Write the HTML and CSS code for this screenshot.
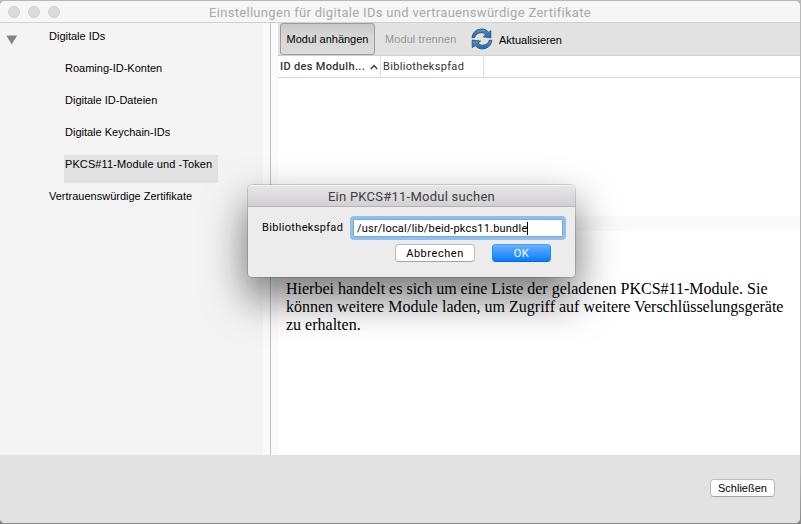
FILE: index.html
```
<!DOCTYPE html>
<html lang="de">
<head>
<meta charset="utf-8">
<title>Einstellungen für digitale IDs</title>
<link rel="stylesheet" href="styles.css">
</head>
<body>
<div class="window">
  <header class="titlebar">
    <div class="lights"><i></i><i></i><i></i></div>
    <span class="title">Einstellungen für digitale IDs und vertrauenswürdige Zertifikate</span>
  </header>
  <div class="body">
    <nav class="sidebar">
      <svg class="disclosure" width="12" height="10" viewBox="0 0 12 10"><path d="M.3 .5h10.8L5.7 9.500z" fill="#858585"/></svg>
      <div class="tree">
        <div class="item">Digitale IDs</div>
        <div class="item child">Roaming-ID-Konten</div>
        <div class="item child">Digitale ID-Dateien</div>
        <div class="item child">Digitale Keychain-IDs</div>
        <div class="item child selected">PKCS#11-Module und -Token</div>
        <div class="item">Vertrauenswürdige Zertifikate</div>
      </div>
    </nav>
    <div class="divider"></div>
    <main class="main">
      <div class="toolbar">
        <button class="tool pressed">Modul anhängen</button>
        <span class="tool-off">Modul trennen</span>
        <svg class="refresh" width="22" height="22" viewBox="0 0 22 22">
          <defs><linearGradient id="blue" x1="0" y1="0" x2="0" y2="1"><stop offset="0" stop-color="#5595cf"/><stop offset="1" stop-color="#2465a8"/></linearGradient></defs>
          <g fill="url(#blue)" stroke="#24486b" stroke-width=".8" stroke-linejoin="round">
            <path d="M1 9.600C1.600 4.300 5.600 1 10.600 1c3 0 5.400 1.200 7 3.300l2.200-1.600v7.100l-7.500-1 2.400-1.900C13.700 5.500 12.300 4.700 10.500 4.700 7.300 4.700 4.600 6.300 3.600 9.600z"/>
            <path d="M20.900 12.300C20.300 17.600 16.300 20.900 11.300 20.900c-3 0-5.400-1.200-7-3.300L1.200 19.600v-7.500l8.400 1-2.400 1.900c1 1.400 2.400 2.200 4.200 2.200 3.200 0 5.900-1.600 6.900-4.900z"/>
          </g>
        </svg>
        <span class="tool-refresh">Aktualisieren</span>
      </div>
      <div class="columns">
        <div class="col first"><span>ID des Modulh...</span><svg width="8" height="6" viewBox="0 0 8 6"><path d="M.8 5 4 1.500 7.200 5" fill="none" stroke="#333" stroke-width="1.300"/></svg></div>
        <div class="col second"><span>Bibliothekspfad</span></div>
      </div>
      <div class="list"></div>
      <div class="splitter"></div>
      <div class="description"><p>Hierbei handelt es sich um eine Liste der geladenen PKCS#11-Module. Sie</p><p>können weitere Module laden, um Zugriff auf weitere Verschlüsselungsgeräte</p><p>zu erhalten.</p></div>
    </main>
  </div>
  <footer class="footer"><button class="btn close">Schließen</button></footer>
</div>
<section class="dialog">
  <header class="dialog-title">Ein PKCS#11-Modul suchen</header>
  <div class="dialog-row">
    <label>Bibliothekspfad</label>
    <div class="field"><span class="path">/usr/local/lib/beid-pkcs11.bundle</span><i class="caret"></i></div>
  </div>
  <div class="dialog-actions">
    <button class="btn cancel">Abbrechen</button>
    <button class="btn ok">OK</button>
  </div>
</section>
</body>
</html>
```
FILE: styles.css
```
* { box-sizing: border-box; }
body {
  margin: 0;
  width: 801px;
  height: 524px;
  padding: 1px 1px 1px 0;
  overflow: hidden;
  background: linear-gradient(#b8b8b8, #b5b5b5 90%, #888);
  font: 11px/14px "Liberation Sans", Arial, sans-serif;
  color: #000;
}
button { margin: 0; padding: 0; font: inherit; color: inherit; }
span, label, .item { white-space: nowrap; }
.window {
  display: flex;
  flex-direction: column;
  height: 522px;
  border-radius: 5px;
  overflow: hidden;
  background: #fff;
}
.titlebar {
  position: relative;
  display: flex;
  align-items: center;
  justify-content: center;
  height: 22px;
  flex: none;
  background: #f6f6f6;
  border-bottom: 1px solid #d1d1d1;
  color: #a9a9a9;
  font: 13px/20px Roboto, sans-serif;
  letter-spacing: .31px;
}
.title { padding-top: 2px; }
.lights { position: absolute; left: 8px; top: 5px; display: flex; gap: 8px; }
.lights i { width: 12px; height: 12px; border-radius: 50%; background: #dcdcdc; border: 1px solid #cfcfcf; }
.body { display: flex; height: 432px; flex: none; }
.sidebar { display: flex; width: 263px; background: #f4f4f4; padding: 6px 0 0 6px; }
.disclosure { margin-top: 6px; flex: none; }
.tree { padding-left: 30px; }
.item { height: 32px; padding-left: 1px; }
.item.child { margin-left: 16px; }
.item.selected { width: 154px; height: 28px; margin-top: -2px; margin-bottom: 6px; padding-top: 2px; background: #e2e2e2; letter-spacing: .1px; }
.divider { width: 15px; background: linear-gradient(#c4c4c4, #c4c4c4) 7px 0 / 1px 100% no-repeat #fafafa; }
.main { display: flex; flex-direction: column; width: 522px; }
.toolbar { display: flex; align-items: center; height: 33px; flex: none; background: #e2e2e2; border-bottom: 1px solid #d0d0d0; padding-left: 2px; }
.tool { width: 95px; height: 32px; border: 1px solid #9c9c9c; border-radius: 3px; background: linear-gradient(#c9c9c9, #d6d6d6 40%, #dcdcdc); }
.tool-off { margin-left: 10px; width: 86px; color: #979797; letter-spacing: .08px; }
.tool-refresh { margin: 2px 0 0 6px; }
.columns { display: flex; height: 22px; flex: none; border-bottom: 1px solid #d6d6d6; color: #333; font: 11px/20px Roboto, sans-serif; letter-spacing: .33px; }
.col { display: flex; align-items: center; height: 21px; }
.first { width: 103px; padding: 0 2px; border-right: 1px solid #dedede; justify-content: space-between; font-weight: 500; }
.second { width: 103px; padding-left: 2px; border-right: 1px solid #dedede; }
.list { height: 138px; flex: none; }
.splitter { height: 15px; flex: none; background: #fafafa; }
.description { padding: 49px 0 0 8px; font: 16px/18px "Liberation Serif", "Times New Roman", serif; }
.description p { margin: 0; white-space: nowrap; }
.footer { display: flex; justify-content: flex-end; flex: 1; background: #e2e2e2; padding: 24px 25px 0 0; }
.btn { height: 18px; border: 1px solid #bcbcbc; border-bottom-color: #a5a5a5; border-radius: 4px; background: #fff; line-height: 16px; }
.close { width: 65px; }
.dialog {
  position: absolute;
  left: 248px;
  top: 185px;
  width: 327px;
  height: 92px;
  border-radius: 5px 5px 4px 4px;
  background: #ececec;
  box-shadow: 0 0 0 1px rgba(0,0,0,.15), 0 20px 40px 2px rgba(0,0,0,.52);
  font: 11px/14px Roboto, sans-serif;
  letter-spacing: .33px;
}
.dialog-title { height: 22px; border-bottom: 1px solid #b5b3b5; border-radius: 5px 5px 0 0; background: linear-gradient(#e8e6e8, #d2d0d2); box-shadow: inset 0 1px #f4f4f4; text-align: center; color: #3d3d3d; font-size: 13px; line-height: 23px; letter-spacing: .25px; }
.dialog-row { display: flex; align-items: center; height: 24px; margin: 9px 9px 0 14px; justify-content: space-between; }
.field { display: flex; align-items: center; width: 216px; height: 24px; padding-left: 4px; border: 3px solid #8dc0f0; border-radius: 4px; background: #fff; box-shadow: inset 0 0 0 1px #76a8dc; letter-spacing: .2px; }
.path { padding-top: 2px; }
.caret { width: 1px; height: 13px; background: #000; }
.dialog-actions { display: flex; justify-content: flex-end; gap: 17px; margin: 4px 24px 0 0; }
.dialog-actions .btn { letter-spacing: .55px; line-height: 17px; }
.cancel { width: 80px; }
.ok { width: 59px; color: #fff; border-color: #4a9df5 #2a86f0 #0a66d8; background: linear-gradient(#68b2fb, #087dff); }
```
